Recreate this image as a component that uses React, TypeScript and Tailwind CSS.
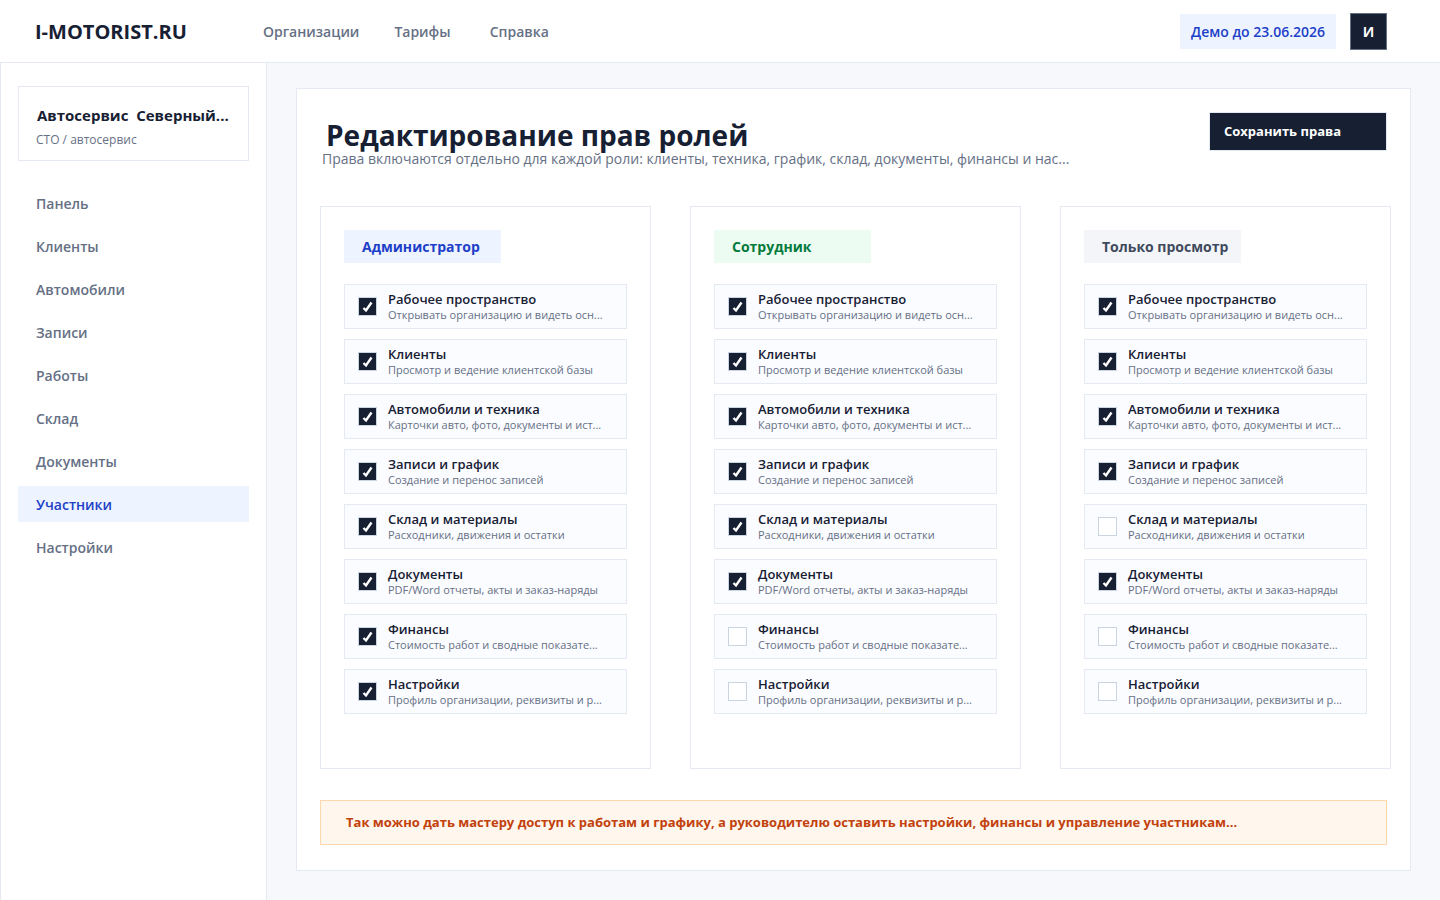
const font = "font-['Open_Sans',sans-serif]";

const nav = ["Панель", "Клиенты", "Автомобили", "Записи", "Работы", "Склад", "Документы", "Участники", "Настройки"];

const perms: [string, string][] = [
  ["Рабочее пространство", "Открывать организацию и видеть осн..."],
  ["Клиенты", "Просмотр и ведение клиентской базы"],
  ["Автомобили и техника", "Карточки авто, фото, документы и ист..."],
  ["Записи и график", "Создание и перенос записей"],
  ["Склад и материалы", "Расходники, движения и остатки"],
  ["Документы", "PDF/Word отчеты, акты и заказ-наряды"],
  ["Финансы", "Стоимость работ и сводные показате..."],
  ["Настройки", "Профиль организации, реквизиты и р..."],
];

const roles = [
  { name: "Администратор", badge: "bg-[#eef4ff] text-[#1d40c8]", on: [1, 1, 1, 1, 1, 1, 1, 1] },
  { name: "Сотрудник", badge: "bg-[#edfcf3] text-[#047a3c]", on: [1, 1, 1, 1, 1, 1, 0, 0] },
  { name: "Только просмотр", badge: "bg-[#f3f5f9] text-[#3f4a5c]", on: [1, 1, 1, 1, 0, 1, 0, 0] },
];

function Check({ on }: { on: boolean }) {
  return on ? (
    <span className="flex h-[19px] w-[19px] shrink-0 items-center justify-center border border-[#cbd5e1] bg-[#172033]">
      <svg width="13" height="13" viewBox="0 0 13 13">
        <path d="M2.5 8 L5 10.5 L10.5 2.5" fill="none" stroke="#fff" strokeWidth="2.4" />
      </svg>
    </span>
  ) : (
    <span className="h-[19px] w-[19px] shrink-0 border border-[#cbd5e1] bg-white" />
  );
}

export default function App() {
  return (
    <div className={`${font} flex min-h-[900px] flex-col bg-[#f6f8fc] text-[#172033]`}>
      <header className="flex h-[63px] items-center border-b border-[#e4e9f2] bg-white pl-[35px] pr-[53px]">
        <div className="w-[228px] pt-[2px] text-[20px] font-bold leading-[28px]">I-MOTORIST.RU</div>
        <nav className="flex items-center text-[14px] font-semibold text-[#667085]">
          <span>Организации</span>
          <span className="ml-[35px]">Тарифы</span>
          <span className="ml-[39px]">Справка</span>
        </nav>
        <div className="ml-auto flex items-center gap-[14px]">
          <span className="flex h-[35px] w-[156px] items-center justify-center border border-[#eef4ff] bg-[#eef4ff] text-[14px] font-semibold text-[#1d40c8]">Демо до 23.06.2026</span>
          <span className="flex h-[37px] w-[37px] items-center justify-center border border-[#667085] bg-[#172033] text-[14px] font-bold text-white">И</span>
        </div>
      </header>
      <div className="flex flex-1">
        <aside className="w-[267px] shrink-0 border-x border-[#e4e9f2] bg-white px-[17px] pt-[23px]">
          <div className="h-[75px] border border-[#e4e9f2] pl-[18px] pr-[17px] pt-[17px]">
            <div className="truncate whitespace-pre text-[15px] font-bold leading-[22px]">Автосервис  Северный...</div>
            <div className="-ml-px mt-[6px] text-[12px] leading-[16px] text-[#667085]">СТО / автосервис</div>
          </div>
          <nav className="mt-[24px] flex flex-col gap-[7px]">
            {nav.map((n) => (
              <div key={n} className={`flex h-[36px] items-center px-[18px] text-[14px] font-semibold ${n === "Участники" ? "bg-[#eef4ff] text-[#1d40c8]" : "text-[#667085]"}`}>{n}</div>
            ))}
          </nav>
        </aside>
        <main className="min-w-0 flex-1 pl-[29px] pr-[29px] pt-[25px]">
          <section className="h-[783px] w-[1115px] border border-[#e4e9f2] bg-white px-[23px] pt-[23px]">
            <div className="flex items-start justify-between">
              <div>
                <h1 className="pl-[6px] pt-[3px] text-[28px] font-bold leading-[40px]">Редактирование прав ролей</h1>
                <p className="-mt-[6px] pl-[2px] text-[14px] leading-[20px] text-[#667085]">Права включаются отдельно для каждой роли: клиенты, техника, график, склад, документы, финансы и нас...</p>
              </div>
              <button className="flex h-[39px] w-[178px] items-center border border-[#e4e9f2] bg-[#172033] pl-[14px] text-[13px] font-bold text-white">Сохранить права</button>
            </div>
            <div className="mt-[37px] grid grid-cols-[331px_331px_331px] gap-[39px]">
              {roles.map((r) => (
                <div key={r.name} className="h-[563px] border border-[#e4e9f2] bg-white px-[23px] pt-[23px]">
                  <span className={`flex h-[33px] w-[157px] items-center pl-[18px] text-[14px] font-bold ${r.badge}`}>{r.name}</span>
                  <div className="mt-[21px] flex flex-col gap-[10px]">
                    {perms.map(([t, d], i) => (
                      <div key={t} className="flex h-[45px] w-[283px] items-center gap-[11px] border border-[#e4e9f2] bg-[#fbfcff] pl-[13px]">
                        <Check on={!!r.on[i]} />
                        <div className="min-w-0">
                          <div className="text-[13px] font-semibold leading-[16px]">{t}</div>
                          <div className="text-[11px] leading-[15px] text-[#667085]">{d}</div>
                        </div>
                      </div>
                    ))}
                  </div>
                </div>
              ))}
            </div>
            <div className="mt-[31px] flex h-[45px] items-center border border-[#fed7aa] bg-[#fff6ed] pl-[25px] text-[13px] font-bold text-[#c2410c]">Так можно дать мастеру доступ к работам и графику, а руководителю оставить настройки, финансы и управление участникам...</div>
          </section>
        </main>
      </div>
    </div>
  );
}
